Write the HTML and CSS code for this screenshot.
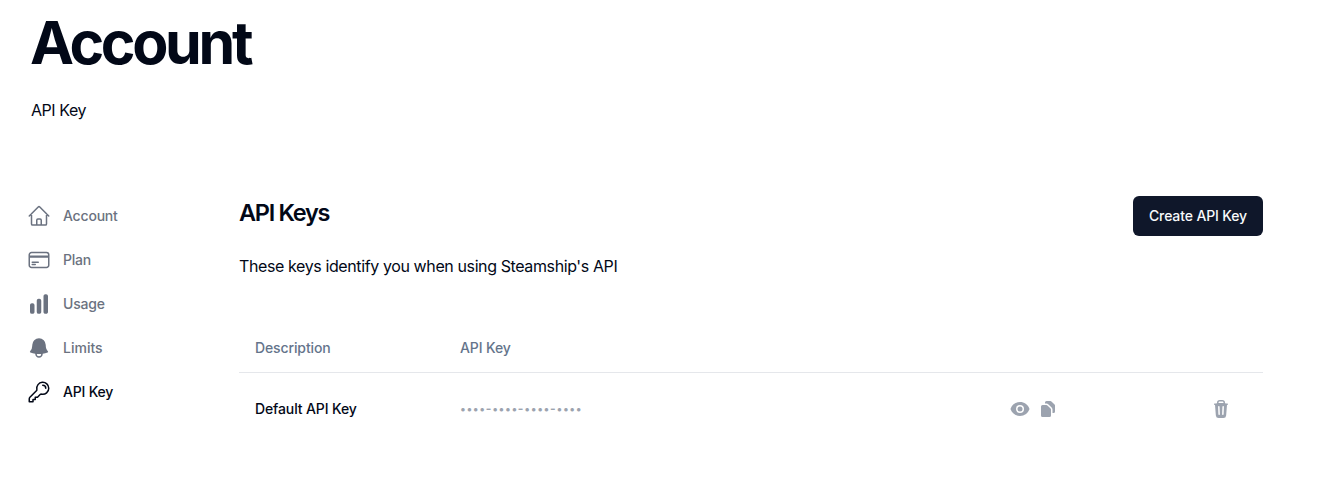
FILE: index.html
```html
<!DOCTYPE html>
<html lang="en">
<head>
<meta charset="utf-8">
<title>Account</title>
<link rel="stylesheet" href="styles.css">
</head>
<body>
<header class="page-header">
  <h1 class="page-title">Account</h1>
  <p class="page-subtitle">API Key</p>
</header>
<div class="layout">
  <nav class="sidebar">
    <a class="nav-item">
      <svg class="nav-icon" viewBox="0 0 24 24" fill="none" stroke="currentColor" stroke-width="1.5" stroke-linecap="round" stroke-linejoin="round"><path d="m2.25 12 8.954-8.955c.44-.439 1.152-.439 1.591 0L21.75 12M4.5 9.75v10.125c0 .621.504 1.125 1.125 1.125H9.75v-4.875c0-.621.504-1.125 1.125-1.125h2.25c.621 0 1.125.504 1.125 1.125V21h4.125c.621 0 1.125-.504 1.125-1.125V9.75M8.25 21h8.25"/></svg>
      <span class="nav-label">Account</span>
    </a>
    <a class="nav-item">
      <svg class="nav-icon" viewBox="0 0 24 24" fill="none" stroke="currentColor" stroke-width="1.5" stroke-linecap="round" stroke-linejoin="round"><path d="M2.25 8.25h19.5M2.25 9h19.5m-16.5 5.25h6m-6 2.25h3m-3.75 3h15a2.25 2.25 0 0 0 2.25-2.25V6.75A2.25 2.25 0 0 0 19.5 4.5h-15a2.25 2.25 0 0 0-2.25 2.25v10.5A2.25 2.25 0 0 0 4.5 19.5Z"/></svg>
      <span class="nav-label">Plan</span>
    </a>
    <a class="nav-item">
      <svg class="nav-icon" viewBox="0 0 24 24" fill="currentColor"><path d="M18.375 2.25c-1.035 0-1.875.84-1.875 1.875v15.75c0 1.035.84 1.875 1.875 1.875h.75c1.035 0 1.875-.84 1.875-1.875V4.125c0-1.036-.84-1.875-1.875-1.875h-.75ZM9.75 8.625c0-1.036.84-1.875 1.875-1.875h.75c1.036 0 1.875.84 1.875 1.875v11.25c0 1.035-.84 1.875-1.875 1.875h-.75a1.875 1.875 0 0 1-1.875-1.875V8.625ZM3 13.125c0-1.036.84-1.875 1.875-1.875h.75c1.036 0 1.875.84 1.875 1.875v6.75c0 1.035-.84 1.875-1.875 1.875h-.75A1.875 1.875 0 0 1 3 19.875v-6.75Z"/></svg>
      <span class="nav-label">Usage</span>
    </a>
    <a class="nav-item">
      <svg class="nav-icon" viewBox="0 0 24 24" fill="currentColor"><path fill-rule="evenodd" d="M5.25 9a6.75 6.75 0 0 1 13.5 0v.75c0 2.123.8 4.057 2.118 5.52a.75.75 0 0 1-.297 1.206c-1.544.57-3.16.99-4.831 1.243a3.75 3.75 0 1 1-7.48 0 24.585 24.585 0 0 1-4.831-1.244.75.75 0 0 1-.298-1.205A8.217 8.217 0 0 0 5.25 9.75V9Zm4.502 8.9a2.25 2.25 0 1 0 4.496 0 25.057 25.057 0 0 1-4.496 0Z"/></svg>
      <span class="nav-label nav-label-wide">Limits</span>
    </a>
    <a class="nav-item nav-item-active">
      <svg class="nav-icon" viewBox="0 0 24 24" fill="none" stroke="currentColor" stroke-width="1.5" stroke-linecap="round" stroke-linejoin="round"><path d="M15.75 5.25a3 3 0 0 1 3 3m3 0a6 6 0 0 1-7.029 5.912c-.563-.097-1.159.026-1.563.43L10.5 17.25H8.25v2.25H6v2.25H2.25v-2.818c0-.597.237-1.17.659-1.591l6.499-6.499c.404-.404.527-1 .43-1.563A6 6 0 1 1 21.75 8.25Z"/></svg>
      <span class="nav-label">API Key</span>
    </a>
  </nav>
  <main class="content">
    <div class="content-header">
      <div>
        <h2 class="section-title">API Keys</h2>
        <p class="section-text">These keys identify you when using Steamship's API</p>
      </div>
      <button class="create-button"><span class="create-label">Create API Key</span></button>
    </div>
    <div class="key-table">
      <div class="table-row table-head"><span class="description">Description</span><span class="heading-key">API Key</span></div>
      <div class="table-row table-body">
        <span class="key-name">Default API Key</span>
        <span class="key-mask">••••<span class="mask-dash">-</span>••••<span class="mask-dash">-</span>••••<span class="mask-dash">-</span>••••</span>
        <span class="key-actions">
          <svg class="action-icon" viewBox="0 0 20 20" fill="currentColor"><path d="M10 12.5a2.5 2.5 0 1 0 0-5 2.5 2.5 0 0 0 0 5Z"/><path fill-rule="evenodd" d="M.664 10.59a1.651 1.651 0 0 1 0-1.186A10.004 10.004 0 0 1 10 3c4.257 0 7.893 2.66 9.336 6.41.147.381.146.804 0 1.186A10.004 10.004 0 0 1 10 17c-4.257 0-7.893-2.66-9.336-6.41ZM14 10a4 4 0 1 1-8 0 4 4 0 0 1 8 0Z"/></svg>
          <svg class="action-icon" viewBox="0 0 20 20" fill="currentColor"><path d="M7 3.5A1.5 1.5 0 0 1 8.5 2h3.879a1.5 1.5 0 0 1 1.06.44l3.122 3.12A1.5 1.5 0 0 1 17 6.622V12.5a1.5 1.5 0 0 1-1.5 1.5h-1v-3.379a3 3 0 0 0-.879-2.121L10.5 5.379A3 3 0 0 0 8.379 4.5H7v-1Z"/><path d="M4.5 6A1.5 1.5 0 0 0 3 7.5v9A1.5 1.5 0 0 0 4.5 18h7a1.5 1.5 0 0 0 1.5-1.5v-5.879a1.5 1.5 0 0 0-.44-1.06L9.44 6.439A1.5 1.5 0 0 0 8.378 6H4.5Z"/></svg>
        </span>
        <svg class="action-icon" viewBox="0 0 20 20" fill="currentColor"><path fill-rule="evenodd" d="M8.75 1A2.75 2.75 0 0 0 6 3.75v.443c-.795.077-1.584.176-2.365.298a.75.75 0 1 0 .23 1.482l.149-.022.841 10.518A2.75 2.75 0 0 0 7.596 19h4.807a2.75 2.75 0 0 0 2.742-2.53l.841-10.52.149.023a.75.75 0 0 0 .23-1.482A41.03 41.03 0 0 0 14 4.193V3.75A2.75 2.75 0 0 0 11.25 1h-2.5ZM10 4c.84 0 1.673.025 2.5.075V3.75c0-.69-.56-1.25-1.25-1.25h-2.5c-.69 0-1.25.56-1.25 1.25v.325C8.327 4.025 9.16 4 10 4ZM8.58 7.72a.75.75 0 0 0-1.5.06l.3 7.5a.75.75 0 1 0 1.5-.06l-.3-7.5Zm4.34.06a.75.75 0 1 0-1.5-.06l-.3 7.5a.75.75 0 1 0 1.5.06l.3-7.5Z"/></svg>
      </div>
    </div>
  </main>
</div>
</body>
</html>
```
FILE: styles.css
```css
* { box-sizing: border-box; }
body { margin: 0; background: #fff; color: #020817; font-family: Inter, sans-serif; font-size: 16px; line-height: 24px; }
h1, h2, p { margin: 0; }
.page-header { padding: 13px 31px 0; }
.page-title { margin-left: -1px; font-size: 59px; line-height: 60px; font-weight: 720; letter-spacing: -3.3px; }
.page-subtitle { margin-top: 25px; letter-spacing: -0.45px; }
.layout { display: flex; margin-top: 74px; padding: 0 56px 0 27px; }
.sidebar { flex: 0 0 212px; display: flex; flex-direction: column; gap: 20px; padding-top: 8px; }
.nav-item { display: flex; align-items: center; gap: 12px; height: 24px; color: #6b7280; font-size: 14px; line-height: 20px; font-weight: 550; letter-spacing: -0.2px; }
.nav-item-active { color: #020817; }
.nav-label-wide { letter-spacing: 0; }
.nav-icon { width: 24px; height: 24px; }
.content { flex: 1; }
.content-header { display: flex; justify-content: space-between; align-items: flex-start; }
.section-title { margin-top: 1px; font-size: 23.5px; line-height: 32px; font-weight: 600; letter-spacing: -1.3px; }
.section-text { margin-top: 25px; letter-spacing: -0.39px; }
.create-button { width: 130px; height: 40px; padding: 0; border: 0; border-radius: 6px; background: #0f172a; color: #f8fafc; font: 550 14px/20px Inter, sans-serif; letter-spacing: -0.13px; }
.key-table { margin-top: 46px; font-size: 14px; line-height: 20px; font-weight: 550; letter-spacing: -0.12px; }
.table-row { display: grid; grid-template-columns: 205px 550px 201px 20px; align-items: center; padding: 0 16px; }
.table-head { height: 49px; border-bottom: 1px solid #e5e7eb; color: #64748b; }
.table-body { height: 72px; }
.key-mask { margin-bottom: 1px; color: #9ca3af; font-size: 11px; letter-spacing: 0.55px; }
.mask-dash { display: inline-block; width: 6.5px; font-size: 12px; line-height: 1; font-weight: 650; letter-spacing: 0; }
.key-actions { display: flex; gap: 8px; }
.action-icon { display: block; width: 20px; height: 20px; color: #9ca3af; }
```
